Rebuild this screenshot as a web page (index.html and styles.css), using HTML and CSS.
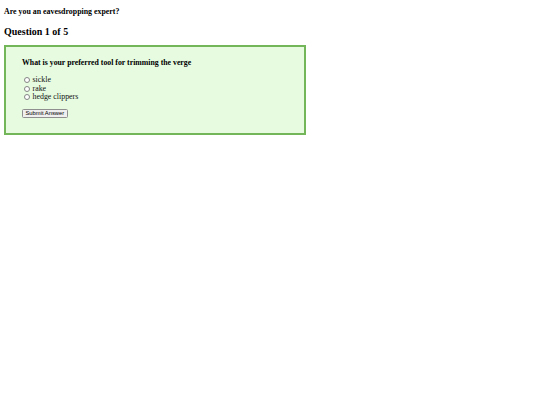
FILE: index.html
```html
<!DOCTYPE html>
<html lang="en">
<head>
<meta charset="utf-8">
<title>Eavesdropping quiz</title>
<link rel="stylesheet" href="styles.css">
</head>
<body>
<div class="page">
  <p class="quiz-title">Are you an eavesdropping expert?</p>
  <h2 class="progress">Question 1 of 5</h2>
  <form class="quiz-box">
    <p class="question">What is your preferred tool for trimming the verge</p>
    <div class="options">
      <label class="option"><input type="radio" name="answer" value="sickle"><span>sickle</span></label>
      <label class="option"><input type="radio" name="answer" value="rake"><span>rake</span></label>
      <label class="option"><input type="radio" name="answer" value="hedge clippers"><span>hedge clippers</span></label>
    </div>
    <button type="button" class="submit">Submit Answer</button>
  </form>
</div>
</body>
</html>
```

FILE: styles.css
```css
html, body {
  margin: 0;
  padding: 0;
  background: #ffffff;
}

.page {
  padding: 0 4px;
  font-family: "Liberation Serif", "Times New Roman", serif;
  font-size: 7.9px;
  color: #000;
}

.quiz-title {
  margin: 7px 0 0;
  font-weight: bold;
  font-size: 7.9px;
  line-height: 9px;
}

.progress {
  margin: 10px 0 7px;
  font-size: 10px;
  line-height: 12px;
  font-weight: bold;
}

.quiz-box {
  width: 266px;
  padding: 11px 16px 15px;
  border: 2px solid #72b659;
  background: #e6fbe0;
}

.question {
  margin: 0 0 9px;
  font-weight: bold;
  font-size: 7.8px;
  line-height: 9px;
}

.options {
  display: flex;
  flex-direction: column;
}

.option {
  display: flex;
  align-items: center;
  height: 8.5px;
  line-height: 8.5px;
  color: #111;
}

.option input {
  appearance: none;
  -webkit-appearance: none;
  box-sizing: border-box;
  width: 6px;
  height: 6px;
  margin: 0 3px 0 1.5px;
  border: 0.8px solid #858585;
  border-radius: 50%;
  background: #ffffff;
}

.submit {
  display: block;
  margin-top: 7.5px;
  height: 8.5px;
  padding: 0 2.5px;
  font-family: "Liberation Sans", Arial, sans-serif;
  font-size: 5.8px;
  line-height: 6.5px;
  color: #000;
  background: #efefef;
  border: 0.8px solid #8f8f8f;
  border-radius: 1.5px;
}
```
